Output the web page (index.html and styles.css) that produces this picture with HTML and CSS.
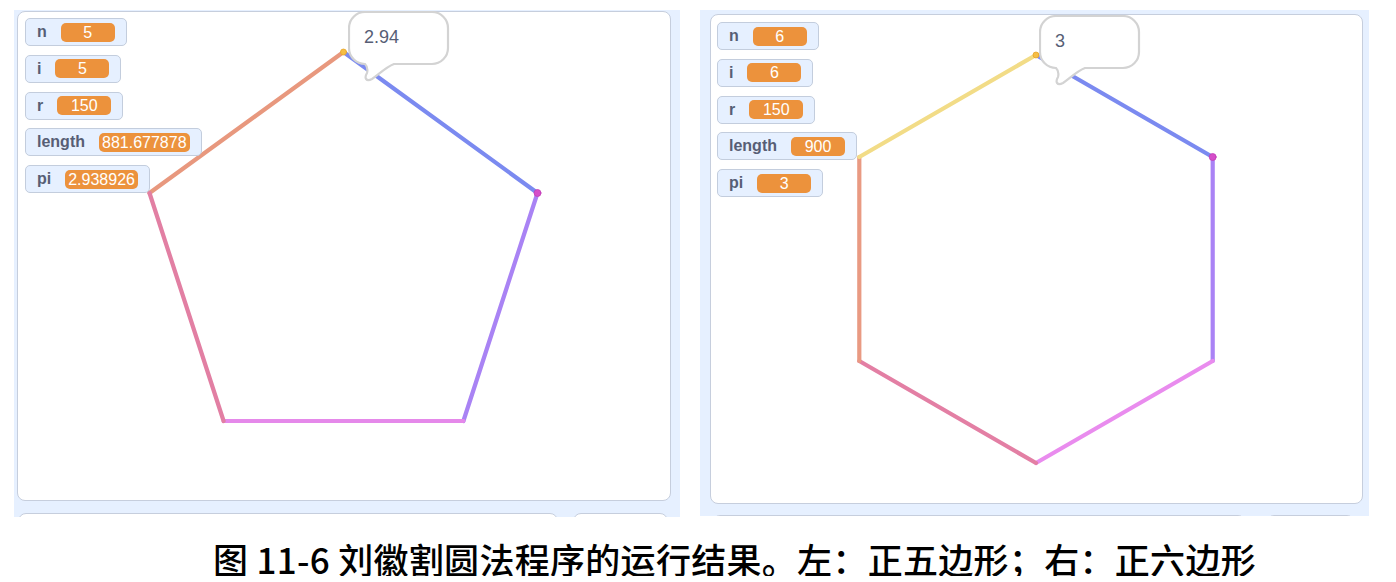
FILE: index.html
```html
<!DOCTYPE html>
<html lang="zh">
<head>
<meta charset="utf-8">
<title>刘徽割圆法</title>
<link rel="stylesheet" href="styles.css">
</head>
<body>
<div class="figure">
  <div class="panel panel-left">
    <div class="stage stage-left">
      <svg class="pen" width="654" height="490" viewBox="0 0 654 490">
        <line x1="132.5" y1="182" x2="326.5" y2="41" stroke="#e8987e"/>
        <line x1="326.5" y1="41" x2="520.5" y2="182" stroke="#7b8af0"/>
        <line x1="520.5" y1="182" x2="446.4" y2="410" stroke="#a983f4"/>
        <line x1="446.4" y1="410" x2="206.6" y2="410" stroke="#e589ea"/>
        <line x1="206.6" y1="410" x2="132.5" y2="182" stroke="#e27fa3"/>
        <circle class="dot-yellow" cx="326.5" cy="41" r="3"/>
        <circle class="dot-magenta" cx="520.5" cy="182" r="3.5"/>
      </svg>
      <div class="monitors monitors-left">
        <div class="monitor"><span class="m-label">n</span><span class="m-value">5</span></div>
        <div class="monitor"><span class="m-label">i</span><span class="m-value">5</span></div>
        <div class="monitor"><span class="m-label">r</span><span class="m-value">150</span></div>
        <div class="monitor"><span class="m-label">length</span><span class="m-value">881.677878</span></div>
        <div class="monitor"><span class="m-label">pi</span><span class="m-value">2.938926</span></div>
      </div>
      <div class="bubble bubble-left">
        <svg class="bubble-shape" width="102" height="72" viewBox="0 0 102 72">
          <path d="M17 1 H84 A16 16 0 0 1 100 17 V37 A16 16 0 0 1 84 53 H46 C38 56 30 64 24 68 C18 71 16 67 19 62 C20 58 19 55 17 53 A16 16 0 0 1 1 37 V17 A16 16 0 0 1 17 1 Z"/>
        </svg>
        <span class="bubble-text">2.94</span>
      </div>
    </div>
    <div class="lower lower-left">
      <div class="lower-box lower-wide-left"></div>
      <div class="lower-box lower-small-left"></div>
    </div>
  </div>

  <div class="panel panel-right">
    <div class="stage stage-right">
      <svg class="pen" width="653" height="490" viewBox="0 0 653 490">
        <line x1="326" y1="41" x2="502.7" y2="143" stroke="#7b8af0"/>
        <line x1="502.7" y1="143" x2="502.7" y2="347" stroke="#aa83f5"/>
        <line x1="502.7" y1="347" x2="326" y2="449" stroke="#e98cee"/>
        <line x1="326" y1="449" x2="149.3" y2="347" stroke="#e37fa4"/>
        <line x1="149.3" y1="347" x2="149.3" y2="143" stroke="#e99a82"/>
        <line x1="149.3" y1="143" x2="326" y2="41" stroke="#f2dc87"/>
        <circle class="dot-yellow" cx="326" cy="41" r="3"/>
        <circle class="dot-magenta" cx="502.7" cy="143" r="3.5"/>
      </svg>
      <div class="monitors monitors-right">
        <div class="monitor"><span class="m-label">n</span><span class="m-value">6</span></div>
        <div class="monitor"><span class="m-label">i</span><span class="m-value">6</span></div>
        <div class="monitor"><span class="m-label">r</span><span class="m-value">150</span></div>
        <div class="monitor"><span class="m-label">length</span><span class="m-value">900</span></div>
        <div class="monitor"><span class="m-label">pi</span><span class="m-value">3</span></div>
      </div>
      <div class="bubble bubble-right">
        <svg class="bubble-shape" width="102" height="72" viewBox="0 0 102 72">
          <path d="M17 1 H84 A16 16 0 0 1 100 17 V37 A16 16 0 0 1 84 53 H46 C38 56 30 64 24 68 C18 71 16 67 19 62 C20 58 19 55 17 53 A16 16 0 0 1 1 37 V17 A16 16 0 0 1 17 1 Z"/>
        </svg>
        <span class="bubble-text">3</span>
      </div>
    </div>
    <div class="lower lower-right">
      <div class="lower-box lower-wide-right"></div>
      <div class="lower-box lower-small-right"></div>
    </div>
  </div>
</div>
<p class="caption">图 11-6 刘徽割圆法程序的运行结果。左：正五边形；右：正六边形</p>
</body>
</html>
```

FILE: styles.css
```css
* { box-sizing: border-box; }

body {
  margin: 0;
  background: #ffffff;
  font-family: "Liberation Sans", Arial, sans-serif;
}

.figure {
  display: flex;
  gap: 20px;
  padding: 10px 0 0 14px;
}

.panel {
  background: #e6f0ff;
  overflow: hidden;
  display: flex;
  flex-direction: column;
  flex: none;
}

.panel-left {
  width: 666px;
  height: 507px;
  padding: 1px 0 0 3px;
}

.panel-right {
  width: 669px;
  height: 506px;
  padding: 4px 0 0 10px;
}

.stage {
  position: relative;
  flex: none;
  background: #ffffff;
  border: 1px solid #c6cedd;
  border-radius: 8px;
}

.stage-left { width: 654px; height: 490px; }
.stage-right { width: 653px; height: 490px; }

.pen {
  position: absolute;
  left: -1px;
  top: -1px;
  fill: none;
  stroke-width: 4.2;
  stroke-linecap: round;
}

.dot-yellow {
  fill: #f5be45;
  stroke: #e8a628;
  stroke-width: 0.8;
}

.dot-magenta {
  fill: #d54ec9;
  stroke: #c33cb8;
  stroke-width: 0.8;
}

.monitors {
  position: relative;
  z-index: 1;
  display: flex;
  flex-direction: column;
  align-items: flex-start;
  gap: 8.75px;
}

.monitors-left { padding: 6px 0 0 7px; }
.monitors-right { padding: 7px 0 0 6px; }

.monitor {
  display: flex;
  align-items: center;
  gap: 14px;
  height: 28px;
  padding: 0 11px;
  background: #e6f0ff;
  border: 1px solid #c3cddd;
  border-radius: 5px;
}

.m-label {
  font-size: 16px;
  font-weight: bold;
  color: #575e75;
}

.m-value {
  min-width: 54px;
  height: 19px;
  padding: 0 3px;
  border-radius: 5px;
  background: #ec923c;
  color: #ffffff;
  font-size: 16px;
  line-height: 19px;
  text-align: center;
}

.bubble {
  position: absolute;
  z-index: 2;
  width: 102px;
  height: 72px;
}

.bubble-left { left: 330px; top: -1px; }
.bubble-right { left: 328px; top: 0; }

.bubble-shape {
  position: absolute;
  left: 0;
  top: 0;
  fill: #ffffff;
  stroke: #d3d3d3;
  stroke-width: 2.2;
}

.bubble-text {
  position: relative;
  display: block;
  padding: 16px 0 0 16px;
  font-size: 18px;
  line-height: 20px;
  color: #575e75;
}

.lower {
  display: flex;
  flex: none;
}

.lower-left { margin-top: 12px; padding-left: 1px; gap: 15px; }
.lower-right { margin-top: 11px; padding-left: 2px; gap: 20px; }

.lower-box {
  height: 30px;
  background: #ffffff;
  border: 1px solid #c6cedd;
  border-radius: 8px;
  flex: none;
}

.lower-wide-left { width: 540px; }
.lower-small-left { width: 95px; }
.lower-wide-right { width: 534px; }
.lower-small-right { width: 89px; }

.caption {
  margin: 24px 0 0;
  padding-left: 213px;
  font-family: "Noto Sans CJK SC", sans-serif;
  font-weight: 500;
  font-size: 35px;
  line-height: 35px;
  letter-spacing: 0.3px;
  color: #000000;
  white-space: nowrap;
}
```
